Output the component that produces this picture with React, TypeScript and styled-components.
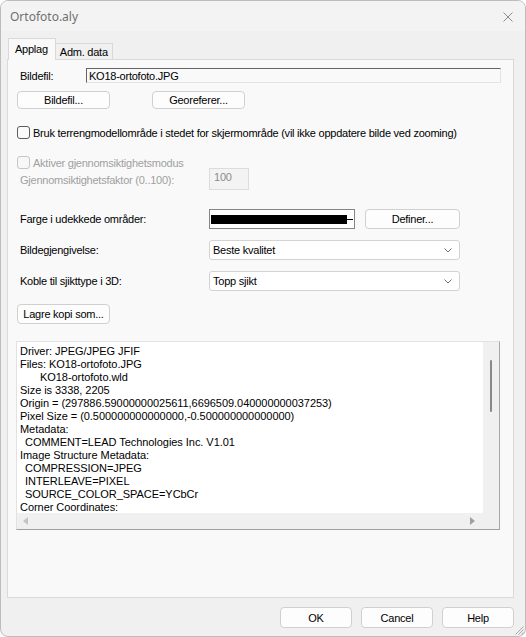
import React from "react";
import styled, { createGlobalStyle, css } from "styled-components";

const GlobalStyle = createGlobalStyle`
  html, body {
    margin: 0;
    padding: 0;
    background: #ffffff;
  }
  * {
    box-sizing: border-box;
  }
`;

const dialogFont = css`
  font-family: "Liberation Sans", Arial, sans-serif;
  font-size: 11px;
  letter-spacing: -0.24px;
  color: #000;
`;

const Window = styled.div`
  position: relative;
  width: 526px;
  height: 637px;
  border: 1px solid #bdbdbd;
  border-radius: 8px;
  overflow: hidden;
  background: #f0f0f0;
  display: flex;
  flex-direction: column;
  ${dialogFont}
`;

const TitleBar = styled.div`
  height: 30px;
  display: flex;
  align-items: center;
  justify-content: space-between;
  padding: 0 12px 0 9px;
  background: #f3f3f3;
`;

const Title = styled.span`
  font-family: "Noto Sans", "Open Sans", sans-serif;
  font-size: 12px;
  letter-spacing: 0;
  color: #707070;
`;

const CloseIcon = styled.svg`
  width: 10px;
  height: 10px;
  margin-top: 1px;
`;

const Body = styled.div`
  flex: 1;
  display: flex;
  flex-direction: column;
  padding: 7px 11px 8px 6px;
`;

const TabStrip = styled.div`
  height: 21px;
  display: flex;
  align-items: flex-end;
  padding-left: 1px;
`;

const Tab = styled.div<{ $active?: boolean }>`
  display: flex;
  align-items: center;
  border: 1px solid #d9d9d9;
  border-bottom: none;
  ${(p) =>
    p.$active
      ? css`
          height: 22px;
          padding: 0 7px 1px 6px;
          background: #f9f9f9;
          margin-bottom: -1px;
          position: relative;
          z-index: 1;
        `
      : css`
          height: 16px;
          padding: 0 4px;
          background: #f0f0f0;
          border-left: none;
        `}
`;

const Panel = styled.div`
  flex: 1;
  display: flex;
  flex-direction: column;
  border: 1px solid #d9d9d9;
  background: #f9f9f9;
  padding: 8px 12px 0 9px;
`;

const Row = styled.div<{ $top: number; $h: number }>`
  display: flex;
  align-items: center;
  margin-top: ${(p) => p.$top}px;
  height: ${(p) => p.$h}px;
`;

const Label = styled.span<{ $w?: number; $disabled?: boolean }>`
  width: ${(p) => (p.$w ? `${p.$w}px` : "auto")};
  flex-shrink: 0;
  padding-left: 3px;
  white-space: nowrap;
  color: ${(p) => (p.$disabled ? "#a0a0a0" : "#000")};
`;

const FileField = styled.div`
  width: 416px;
  height: 15px;
  display: flex;
  align-items: center;
  padding-left: 2px;
  background: #f9f9f9;
  border-top: 1px solid #646464;
  border-left: 1px solid #646464;
  border-right: 1px solid #e3e3e3;
  border-bottom: 1px solid #e3e3e3;
`;

const Button = styled.button<{ $w: number; $h?: number; $gap?: number }>`
  ${dialogFont}
  width: ${(p) => p.$w}px;
  height: ${(p) => p.$h ?? 18}px;
  margin-left: ${(p) => p.$gap ?? 0}px;
  padding: 0;
  background: #fdfdfd;
  border: 1px solid #d0d0d0;
  border-radius: 4px;
  display: flex;
  align-items: center;
  justify-content: center;
`;

const CheckRow = styled.label<{ $disabled?: boolean }>`
  display: flex;
  align-items: center;
  gap: 3px;
  color: ${(p) => (p.$disabled ? "#a0a0a0" : "#000")};
`;

const CheckBox = styled.span<{ $disabled?: boolean }>`
  width: 13px;
  height: 13px;
  border-radius: 3px;
  background: ${(p) => (p.$disabled ? "#f7f7f7" : "#fbfbfb")};
  border: 1px solid ${(p) => (p.$disabled ? "#c6c6c6" : "#5c5c5c")};
`;

const FactorField = styled.div`
  width: 40px;
  height: 22px;
  margin-top: -1px;
  padding: 2px 0 0 4px;
  background: #f3f3f3;
  border: 1px solid #dcdcdc;
  color: #8c8c8c;
`;

const ColorWell = styled.div`
  width: 146px;
  height: 20px;
  display: flex;
  align-items: center;
  padding: 0 1px 0 1px;
  background: #ffffff;
  border: 1px solid #858585;
`;

const ColorBar = styled.div`
  flex: 1;
  height: 9px;
  background: #000;
`;

const ColorTail = styled.div`
  width: 6px;
  height: 1px;
  background: #000;
`;

const Combo = styled.div`
  width: 251px;
  height: 20px;
  display: flex;
  align-items: center;
  justify-content: space-between;
  padding: 0 7px 0 3px;
  background: #ffffff;
  border: 1px solid #d3d3d3;
  border-radius: 3px;
`;

const Chevron = styled.svg`
  width: 8px;
  height: 5px;
`;

const InfoBox = styled.div`
  margin-top: 17px;
  margin-left: -1px;
  width: 484px;
  height: 189px;
  display: grid;
  grid-template-columns: 1fr 16px;
  grid-template-rows: 1fr 16px;
  border-top: 1px solid #e2e2e2;
  border-left: 1px solid #e2e2e2;
  border-right: 1px solid #a8a8a8;
  border-bottom: 1px solid #a0a0a0;
  background: #f0f0f0;
`;

const InfoText = styled.div`
  background: #ffffff;
  padding: 3px 0 0 3px;
  overflow: hidden;
  line-height: 13px;
  letter-spacing: -0.05px;
  white-space: pre;
`;

const InfoLine = styled.div<{ $indent: number }>`
  padding-left: ${(p) => p.$indent}px;
`;

const VScroll = styled.div`
  background: #f0f0f0;
  display: flex;
  justify-content: center;
  padding-top: 18px;
`;

const VThumb = styled.div`
  width: 2px;
  height: 52px;
  background: #8a8a8a;
  border-radius: 1px;
`;

const HScroll = styled.div`
  background: #f0f0f0;
  display: flex;
  align-items: center;
  justify-content: space-between;
  padding: 0 8px 0 6px;
`;

const Arrow = styled.svg`
  width: 5px;
  height: 8px;
`;

const Corner = styled.div`
  background: #f0f0f0;
`;

const Footer = styled.div`
  margin-top: 9px;
  display: flex;
  justify-content: flex-end;
  gap: 9px;
`;

const Grip = styled.svg`
  position: absolute;
  right: 1px;
  bottom: 1px;
  width: 10px;
  height: 10px;
`;

const infoLines: { text: string; indent: number }[] = [
  { text: "Driver: JPEG/JPEG JFIF", indent: 0 },
  { text: "Files: KO18-ortofoto.JPG", indent: 0 },
  { text: "KO18-ortofoto.wld", indent: 20 },
  { text: "Size is 3338, 2205", indent: 0 },
  { text: "Origin = (297886.59000000025611,6696509.040000000037253)", indent: 0 },
  { text: "Pixel Size = (0.500000000000000,-0.500000000000000)", indent: 0 },
  { text: "Metadata:", indent: 0 },
  { text: "COMMENT=LEAD Technologies Inc. V1.01", indent: 5 },
  { text: "Image Structure Metadata:", indent: 0 },
  { text: "COMPRESSION=JPEG", indent: 5 },
  { text: "INTERLEAVE=PIXEL", indent: 5 },
  { text: "SOURCE_COLOR_SPACE=YCbCr", indent: 5 },
  { text: "Corner Coordinates:", indent: 0 },
];

function ComboDown() {
  return (
    <Chevron viewBox="0 0 8 5">
      <path d="M0.5 0.5 L4 4 L7.5 0.5" fill="none" stroke="#707070" strokeWidth="1" />
    </Chevron>
  );
}

function App() {
  return (
    <>
      <GlobalStyle />
      <Window>
        <TitleBar>
          <Title>Ortofoto.aly</Title>
          <CloseIcon viewBox="0 0 10 10">
            <path d="M0.5 0.5 L9.5 9.5 M9.5 0.5 L0.5 9.5" stroke="#8c8c8c" strokeWidth="1" />
          </CloseIcon>
        </TitleBar>

        <Body>
          <TabStrip>
            <Tab $active>Applag</Tab>
            <Tab>Adm. data</Tab>
          </TabStrip>

          <Panel>
            <Row $top={0} $h={15}>
              <Label $w={69}>Bildefil:</Label>
              <FileField>KO18-ortofoto.JPG</FileField>
            </Row>

            <Row $top={8} $h={18}>
              <Button $w={93}>Bildefil...</Button>
              <Button $w={93} $gap={42}>
                Georeferer...
              </Button>
            </Row>

            <Row $top={17} $h={13}>
              <CheckRow>
                <CheckBox />
                Bruk terrengmodellområde i stedet for skjermområde (vil ikke oppdatere bilde ved zooming)
              </CheckRow>
            </Row>

            <Row $top={17} $h={13}>
              <CheckRow $disabled>
                <CheckBox $disabled />
                Aktiver gjennomsiktighetsmodus
              </CheckRow>
            </Row>

            <Row $top={0} $h={21}>
              <Label $w={192} $disabled>
                Gjennomsiktighetsfaktor (0..100):
              </Label>
              <FactorField>100</FactorField>
            </Row>

            <Row $top={19} $h={20}>
              <Label $w={192}>Farge i udekkede områder:</Label>
              <ColorWell>
                <ColorBar />
                <ColorTail />
              </ColorWell>
              <Button $w={95} $h={20} $gap={10}>
                Definer...
              </Button>
            </Row>

            <Row $top={11} $h={20}>
              <Label $w={192}>Bildegjengivelse:</Label>
              <Combo>
                Beste kvalitet
                <ComboDown />
              </Combo>
            </Row>

            <Row $top={11} $h={20}>
              <Label $w={192}>Koble til sjikttype i 3D:</Label>
              <Combo>
                Topp sjikt
                <ComboDown />
              </Combo>
            </Row>

            <Row $top={13} $h={20}>
              <Button $w={93} $h={20}>
                Lagre kopi som...
              </Button>
            </Row>

            <InfoBox>
              <InfoText>
                {infoLines.map((line, i) => (
                  <InfoLine key={i} $indent={line.indent}>
                    {line.text}
                  </InfoLine>
                ))}
              </InfoText>
              <VScroll>
                <VThumb />
              </VScroll>
              <HScroll>
                <Arrow viewBox="0 0 5 8">
                  <path d="M5 0 L0 4 L5 8 Z" fill="#c4c4c4" />
                </Arrow>
                <Arrow viewBox="0 0 5 8">
                  <path d="M0 0 L5 4 L0 8 Z" fill="#a0a0a0" />
                </Arrow>
              </HScroll>
              <Corner />
            </InfoBox>
          </Panel>

          <Footer>
            <Button $w={72} $h={21}>
              OK
            </Button>
            <Button $w={72} $h={21}>
              Cancel
            </Button>
            <Button $w={72} $h={21}>
              Help
            </Button>
          </Footer>
        </Body>

        <Grip viewBox="0 0 10 10">
          <path d="M9.5 1.5 L1.5 9.5 M9.5 4.5 L4.5 9.5 M9.5 7.5 L7.5 9.5" stroke="#a8a8a8" strokeWidth="1" />
        </Grip>
      </Window>
    </>
  );
}

export default App;
